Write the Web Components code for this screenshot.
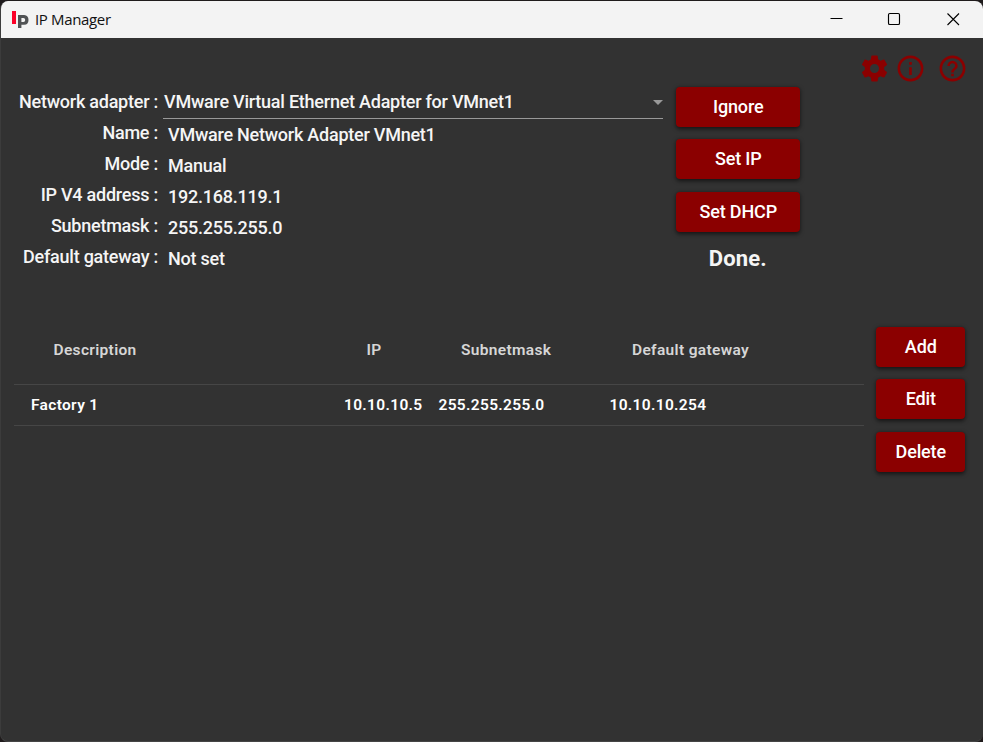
<!DOCTYPE html>
<html lang="en">
<head>
<meta charset="utf-8">
<title>IP Manager</title>
<style>
html, body { margin: 0; height: 100%; background: #1f1b1c; overflow: hidden; }
</style>
</head>
<body>
<app-window></app-window>
<script>
const define = (name, html, setup) => customElements.define(name, class extends HTMLElement {
  connectedCallback() {
    if (this.shadowRoot) return;
    const t = document.createElement('template');
    t.innerHTML = html;
    this.attachShadow({ mode: 'open' }).append(t.content.cloneNode(true));
    if (setup) setup(this, this.shadowRoot);
  }
});

define('title-bar', `
<style>
:host { display: flex; align-items: center; height: 37px; background: #f3f3f3; color: #111; flex: none; padding-right: 1px; }
.logo { width: 18px; height: 20px; margin-left: 10px; flex: none; }
.name { font: 15px/20px "Open Sans", "Noto Sans", sans-serif; letter-spacing: -0.35px; margin: -2px auto 0 6px; white-space: nowrap; }
.ctl { width: 58.5px; height: 37px; flex: none; }
</style>
<svg class="logo" viewBox="0 0 18 20"><rect x="1" y="1" width="4" height="13" fill="#fb0027"/><path d="M7 5v13h3.4v-3.2h2.8q4.3-.3 4.3-4.8T13.2 5zM10.4 8h2q1.8.1 1.8 2t-1.8 2h-2z" fill="#505254" fill-rule="evenodd"/></svg>
<span class="name"><slot></slot></span>
<svg class="ctl" viewBox="0 0 58.5 37"><path d="M23.5 17.5h12" stroke="#000"/></svg>
<svg class="ctl" viewBox="0 0 58.5 37"><rect x="23.5" y="12.5" width="11" height="11" rx="1.3" fill="none" stroke="#000" stroke-width="1.15"/></svg>
<svg class="ctl" viewBox="0 0 58.5 37"><path d="M23.5 12.5l11.5 11.5M35 12.5L23.5 24" fill="none" stroke="#000" stroke-width="1.1"/></svg>
`);

define('tool-icon', `
<style>:host { display: block; width: 31px; height: 31px; } svg { display: block; width: 100%; height: 100%; fill: #8b0000; }</style>
<svg viewBox="0 0 24 24"><path/></svg>
`, (el, root) => root.querySelector('path').setAttribute('d', {
  settings: 'M12 15.5A3.5 3.5 0 0 1 8.5 12 3.5 3.5 0 0 1 12 8.5a3.5 3.5 0 0 1 3.5 3.5 3.5 3.5 0 0 1-3.5 3.5m7.43-2.53c.04-.32.07-.64.07-.97s-.03-.66-.07-1l2.11-1.63c.19-.15.24-.42.12-.64l-2-3.46c-.12-.22-.39-.31-.61-.22l-2.49 1c-.52-.39-1.06-.73-1.69-.98l-.37-2.65A.506.506 0 0 0 14 2h-4c-.25 0-.46.18-.5.42l-.37 2.65c-.63.25-1.17.59-1.69.98l-2.49-1c-.22-.09-.49 0-.61.22l-2 3.46c-.13.22-.07.49.12.64L4.57 11c-.04.34-.07.67-.07 1s.03.65.07.97l-2.11 1.66c-.19.15-.25.42-.12.64l2 3.46c.12.22.39.3.61.22l2.49-1.01c.52.4 1.06.74 1.69.99l.37 2.65c.04.24.25.42.5.42h4c.25 0 .46-.18.5-.42l.37-2.65c.63-.26 1.17-.59 1.69-.99l2.49 1.01c.22.08.49 0 .61-.22l2-3.46c.12-.22.07-.49-.12-.64z',
  info: 'M11 9h2V7h-2m1 13c-4.41 0-8-3.59-8-8s3.59-8 8-8 8 3.59 8 8-3.59 8-8 8m0-18A10 10 0 0 0 2 12a10 10 0 0 0 10 10 10 10 0 0 0 10-10A10 10 0 0 0 12 2m-1 15h2v-6h-2z',
  help: 'M11 18h2v-2h-2zm1-16A10 10 0 0 0 2 12a10 10 0 0 0 10 10 10 10 0 0 0 10-10A10 10 0 0 0 12 2m0 18c-4.41 0-8-3.59-8-8s3.59-8 8-8 8 3.59 8 8-3.59 8-8 8m0-14a4 4 0 0 0-4 4h2a2 2 0 0 1 2-2 2 2 0 0 1 2 2c0 2-3 1.75-3 5h2c0-2.25 3-2.5 3-5a4 4 0 0 0-4-4'
}[el.getAttribute('name')]));

define('action-button', `
<style>
:host { display: block; height: 40px; }
button { display: block; width: 100%; height: 100%; border: 0; padding: 0 0 2px 1px; border-radius: 4px; background: #8b0000; color: #fff;
  font: 500 18px/39px Roboto, sans-serif; letter-spacing: -0.15px; box-shadow: 0 1.5px 4px rgba(0,0,0,.6); white-space: nowrap; }
</style>
<button><slot></slot></button>
`);

define('adapter-select', `
<style>
:host { display: flex; justify-content: space-between; align-items: center; width: 500px; height: 32px; box-sizing: border-box; border-bottom: 1px solid #999; padding-left: 1px; }
span { margin-top: -2px; }
i { width: 0; height: 0; border: 5px solid transparent; border-top-color: #999; border-bottom: 0; }
</style>
<span><slot></slot></span><i></i>
`);

define('detail-row', `
<style>
:host { display: grid; grid-template-columns: 157px 1fr; height: 31px; line-height: 31px; white-space: nowrap; }
.label { text-align: right; }
.value { padding: 2px 0 0 10px; }
</style>
<span class="label"><slot name="label"></slot></span><span class="value"><slot></slot></span>
`);

define('preset-table', `
<style>
:host { display: block; width: 850px; font: 600 15.5px/20px Roboto, sans-serif; white-space: nowrap; letter-spacing: .33px; }
.row { display: grid; grid-template-columns: 313px 94.5px 171px 1fr; box-sizing: border-box; padding-left: 17px; border-bottom: 1px solid #464646; align-items: center; }
.head { height: 71px; color: #d6d6d6; padding-left: 39.5px; padding-top: 1.5px; }
.body { height: 41px; color: #fff; }
</style>
<div class="row head"><span>Description</span><span>IP</span><span>Subnetmask</span><span>Default gateway</span></div>
<div class="row body"><span>Factory 1</span><span>10.10.10.5</span><span>255.255.255.0</span><span>10.10.10.254</span></div>
`);

define('app-window', `
<style>
:host { display: block; height: 100vh; box-sizing: border-box; padding: 1px 0 0; font: 500 18px/31px Roboto, sans-serif; letter-spacing: -0.24px; color: #f5f5f5; }
.win { height: 741px; display: flex; flex-direction: column; box-sizing: border-box; background: #323232; border-left: 1px solid #3c3c3c; border-bottom: 1px solid #454545; border-radius: 8px; overflow: hidden; }
.tools { display: flex; justify-content: flex-end; padding: 15px 15px 0 0; height: 33px; flex: none; }
.tools tool-icon:nth-child(2) { margin: 0 11.5px 0 5px; }
.top { display: grid; grid-template-columns: 674px 125px; height: 240px; flex: none; }
.form { padding-top: 1px; }
.first { display: grid; grid-template-columns: 162px 500px; height: 30px; }
.first > span { text-align: right; padding-right: 5px; line-height: 30px; }
.buttons { display: flex; flex-direction: column; gap: 12.4px; padding: .9px 0 0 .5px; }
.buttons b { font: 700 22px/30px Roboto, sans-serif; text-align: center; letter-spacing: .15px; margin-top: -.5px; }
.bottom { display: grid; grid-template-columns: 850px 90px; column-gap: 11px; padding-left: 13px; }
.bottom preset-table { margin-top: -12px; }
</style>
<div class="win">
<title-bar>IP Manager</title-bar>
<div class="tools"><tool-icon name="settings"></tool-icon><tool-icon name="info"></tool-icon><tool-icon name="help"></tool-icon></div>
<div class="top">
  <div class="form">
    <div class="first"><span>Network adapter :</span><adapter-select>VMware Virtual Ethernet Adapter for VMnet1</adapter-select></div>
    <detail-row><span slot="label">Name :</span>VMware Network Adapter VMnet1</detail-row>
    <detail-row><span slot="label">Mode :</span>Manual</detail-row>
    <detail-row><span slot="label">IP V4 address :</span>192.168.119.1</detail-row>
    <detail-row><span slot="label">Subnetmask :</span>255.255.255.0</detail-row>
    <detail-row><span slot="label">Default gateway :</span>Not set</detail-row>
  </div>
  <div class="buttons"><action-button>Ignore</action-button><action-button>Set IP</action-button><action-button>Set DHCP</action-button><b>Done.</b></div>
</div>
<div class="bottom">
  <preset-table></preset-table>
  <div class="buttons"><action-button>Add</action-button><action-button>Edit</action-button><action-button>Delete</action-button></div>
</div>
</div>
`);
</script>
</body>
</html>
